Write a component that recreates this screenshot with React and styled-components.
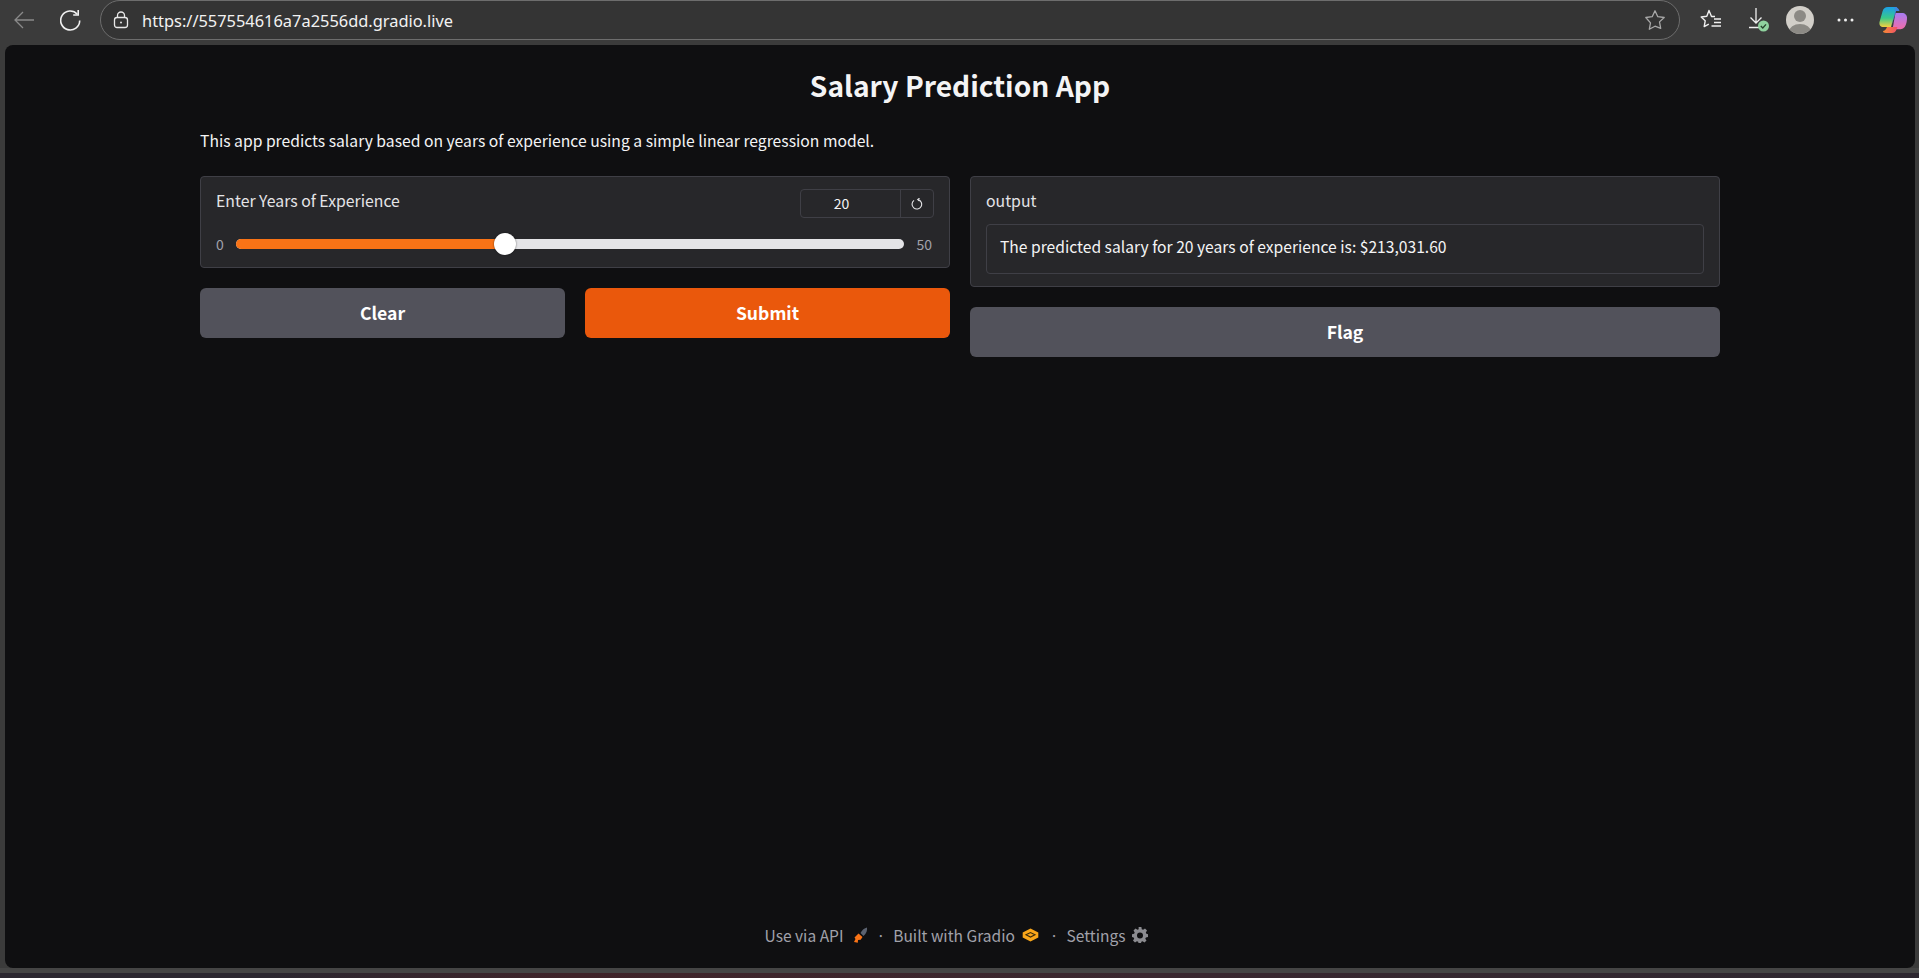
import React from 'react';
import styled, { createGlobalStyle } from 'styled-components';

const GlobalStyle = createGlobalStyle`
    html, body {
        margin: 0;
        padding: 0;
        height: 100%;
        background: #3b3b3b;
        overflow: hidden;
    }
    #root {
        height: 100%;
    }
`

const Screen = styled.div`
    height: 978px;
    display: flex;
    flex-direction: column;
    background: #3b3b3b;
    font-family: "Noto Sans CJK KR", "Source Sans Pro", "Noto Sans", sans-serif;
`

const TopBar = styled.div`
    height: 45px;
    flex-shrink: 0;
    display: flex;
    align-items: flex-start;
    padding: 0 0 0 14px;
    box-sizing: border-box;
`

const NavButton = styled.div`
    width: ${p => p.$w}px;
    height: 40px;
    display: flex;
    align-items: center;
    flex-shrink: 0;
`

const AddressBar = styled.div`
    width: 1580px;
    height: 40px;
    margin-left: 14px;
    box-sizing: border-box;
    border: 1px solid #6d6d6d;
    border-radius: 20px;
    background: #343434;
    display: flex;
    align-items: center;
    padding: 0 13px 0 12px;
    flex-shrink: 0;
`

const Url = styled.span`
    margin-left: 13px;
    flex: 1;
    font-family: "Noto Sans", "Open Sans", sans-serif;
    font-size: 16.4px;
    color: #f2f2f2;
`

const Tools = styled.div`
    display: flex;
    align-items: center;
    margin-left: 20px;
`

const Page = styled.div`
    flex: 1;
    margin: 0 4px 0 5px;
    background: #0f0f11;
    border-radius: 8px;
    display: flex;
    flex-direction: column;
    align-items: center;
    min-height: 0;
`

const Content = styled.div`
    width: 1520px;
    display: flex;
    flex-direction: column;
`

const Title = styled.h1`
    margin: 0;
    padding-top: 18px;
    height: 68px;
    box-sizing: border-box;
    text-align: center;
    font-size: 28.2px;
    line-height: 44px;
    font-weight: 600;
    color: #f4f4f5;
`

const Intro = styled.p`
    margin: 0;
    padding-top: 16px;
    height: 63px;
    box-sizing: border-box;
    font-size: 15.7px;
    line-height: 24px;
    color: #f4f4f5;
`

const Columns = styled.div`
    display: grid;
    grid-template-columns: 750px 750px;
    gap: 20px;
    align-items: start;
`

const Column = styled.div`
    display: flex;
    flex-direction: column;
    gap: 20px;
`

const Panel = styled.div`
    background: #27272a;
    border: 1px solid #3f3f46;
    border-radius: 4px;
    box-sizing: border-box;
    padding: 11px 15px 0 15px;
    height: ${p => p.$h}px;
`

const SliderHead = styled.div`
    display: flex;
    justify-content: space-between;
    align-items: flex-start;
    height: 48px;
`

const Label = styled.span`
    display: block;
    padding-top: 1px;
    height: 24px;
    font-size: 15.8px;
    line-height: 24px;
    color: #e4e4e7;
`

const NumberBox = styled.div`
    display: flex;
    height: 29px;
    width: 134px;
    margin-top: 1px;
    box-sizing: border-box;
    border: 1px solid #3f3f46;
    border-radius: 4px;
    color: #f4f4f5;
    font-size: 14px;
    line-height: 27px;
    text-align: center;
`

const NumberValue = styled.span`
    flex: 1;
    padding-right: 18px;
    border-right: 1px solid #3f3f46;
`

const ResetButton = styled.span`
    width: 32px;
    display: flex;
    align-items: center;
    justify-content: center;
`

const SliderRow = styled.div`
    display: flex;
    align-items: center;
    height: 22px;
    margin-top: -3px;
`

const Bound = styled.span`
    font-size: 14px;
    color: #a1a1aa;
    width: ${p => p.$w}px;
    flex-shrink: 0;
    text-align: ${p => p.$align};
`

const Track = styled.div`
    position: relative;
    width: 668px;
    height: 10px;
    flex-shrink: 0;
    border-radius: 5px;
    background: #e4e4e7;
`

const Fill = styled.div`
    height: 100%;
    border-radius: 5px;
    background: #f97316;
`

const Thumb = styled.div`
    position: absolute;
    top: -6px;
    width: 22px;
    height: 22px;
    margin-left: -9px;
    border-radius: 50%;
    background: #fff;
    box-shadow: 0 0 2px rgba(0, 0, 0, 0.6);
`

const ButtonRow = styled.div`
    display: grid;
    grid-template-columns: 1fr 1fr;
    gap: 20px;
`

const Button = styled.button`
    height: 50px;
    padding: 0 0 2px 0;
    border: none;
    border-radius: 6px;
    background: ${p => p.$primary ? "#ea580c" : "#52525b"};
    color: #fff;
    font-family: inherit;
    font-size: 17.6px;
    font-weight: 600;
`

const OutputBox = styled.div`
    margin-top: 11px;
    height: 50px;
    box-sizing: border-box;
    border: 1px solid #3f3f46;
    border-radius: 4px;
    padding: 0 13px 6px 13px;
    display: flex;
    align-items: center;
    font-size: 15.65px;
    color: #f4f4f5;
`

const Footer = styled.div`
    margin-top: auto;
    height: 45px;
    padding-right: 7px;
    display: flex;
    align-items: flex-start;
    font-size: 15.55px;
    line-height: 24px;
    color: #a1a1aa;
`

const FooterLink = styled.span`
    display: flex;
    align-items: center;
    gap: ${p => p.$gap}px;
`

const Dot = styled.span`
    margin: 0 ${p => p.$r}px 0 ${p => p.$l}px;
`

const BottomStrip = styled.div`
    height: 10px;
    flex-shrink: 0;
    display: flex;
    flex-direction: column;
`

const StripEdge = styled.div`
    height: 5px;
    background: #454545;
`

const StripWallpaper = styled.div`
    height: 5px;
    background: linear-gradient(90deg, #2b2730 0%, #2b2730 14%, #40242a 30%, #3a2830 60%, #2d2730 100%);
`

const BackIcon = () => (
    <svg width="20" height="20" viewBox="0 0 20 20" fill="none" stroke="#8a8a8a" strokeWidth="1.3">
        <path d="M20 10H1M9 2l-8 8 8 8" />
    </svg>
)

const ReloadIcon = () => (
    <svg width="21" height="22" viewBox="0 0 21 22" fill="none" stroke="#f0f0f0" strokeWidth="1.6">
        <path d="M17.300 5.200A9.500 9.500 0 1 0 19.700 11.500" />
        <path d="M18.200 1v5h-5" />
    </svg>
)

const LockIcon = () => (
    <svg width="16" height="18" viewBox="0 0 16 18" fill="none" stroke="#e8e8e8" strokeWidth="1.3">
        <rect x="1.500" y="6.500" width="13" height="10" rx="2.500" />
        <path d="M4.500 6.500V4.500a3.500 3.500 0 0 1 7 0v2" />
        <circle cx="8" cy="11.500" r="1" fill="#e8e8e8" stroke="none" />
    </svg>
)

const StarIcon = () => (
    <svg width="22" height="22" viewBox="0 0 22 22" fill="none" stroke="#a8a8a8" strokeWidth="1.3" strokeLinejoin="round">
        <path d="M11 1.800l2.800 5.900 6.400.8-4.700 4.400 1.200 6.400L11 17.200l-5.700 3.100 1.200-6.400L1.800 8.500l6.400-.8z" />
    </svg>
)

const FavoritesIcon = () => (
    <svg width="22" height="22" viewBox="0 0 22 22" fill="none" stroke="#f0f0f0" strokeWidth="1.4" strokeLinejoin="round">
        <path d="M15 7.500H11.500L9 1.500 6.800 7.300l-5.600.7 4 3.800-1 5.800 4.600-2.500" />
        <path d="M14 10h7M14 13.500h7M11.500 17h9.500" />
    </svg>
)

const DownloadIcon = () => (
    <svg width="24" height="26" viewBox="0 0 24 26" fill="none">
        <path d="M8 1v15M2.500 10.500l5.500 5.500 5.500-5.500M1 20.500h11" stroke="#f0f0f0" strokeWidth="1.3" />
        <circle cx="15.500" cy="19" r="5.500" fill="#8fd19e" />
        <path d="M12.800 19l2 2 3.200-3.600" stroke="#26402c" strokeWidth="1.3" />
    </svg>
)

const AvatarIcon = () => (
    <svg width="28" height="28" viewBox="0 0 28 28">
        <defs>
            <clipPath id="avatar-clip"><circle cx="14" cy="14" r="14" /></clipPath>
        </defs>
        <circle cx="14" cy="14" r="14" fill="#d2cfc9" />
        <g clipPath="url(#avatar-clip)" fill="#8c8a85">
            <circle cx="14" cy="10" r="6" />
            <ellipse cx="14" cy="26" rx="11" ry="8" />
        </g>
    </svg>
)

const MoreIcon = () => (
    <svg width="17" height="4" viewBox="0 0 17 4" fill="#efefef">
        <circle cx="2" cy="2" r="1.500" />
        <circle cx="8.500" cy="2" r="1.500" />
        <circle cx="15" cy="2" r="1.500" />
    </svg>
)

const CopilotIcon = () => (
    <svg width="28" height="28" viewBox="0 0 28 28">
        <defs>
            <linearGradient id="cop-a" x1="0" y1="0" x2="0" y2="1">
                <stop offset="0" stopColor="#1c9fe8" />
                <stop offset="0.55" stopColor="#38c98a" />
                <stop offset="1" stopColor="#f4d03f" />
            </linearGradient>
            <linearGradient id="cop-b" x1="0" y1="0" x2="0" y2="1">
                <stop offset="0" stopColor="#a77cf2" />
                <stop offset="1" stopColor="#f06ca8" />
            </linearGradient>
            <linearGradient id="cop-c" x1="0" y1="0" x2="1" y2="0">
                <stop offset="0" stopColor="#f78a33" />
                <stop offset="1" stopColor="#f0506a" />
            </linearGradient>
        </defs>
        <path d="M9 1h9l-6 20H4.500C1.500 21 0 19 .5 16L3.500 5.500C4.200 2.500 6 1 9 1z" fill="url(#cop-a)" />
        <path d="M16.500 7h6.500c3 0 5 2 5 5 0 5-1.500 9-4 10.500-1 .5-2 .8-3.500.8h-7z" fill="url(#cop-b)" />
        <path d="M8 21h10.500l-1 2.500C16.700 26 15 27 13 27H7c-2 0-3-1-3-2 1.500 0 3-1.500 4-4z" fill="url(#cop-c)" />
        <path d="M15.500 1c2.500 0 4.300 1.500 5 4H17l-5 16 4-15z" fill="#3f86e0" />
    </svg>
)

const ResetIcon = () => (
    <svg width="12" height="12" viewBox="0 0 12 12" fill="none" stroke="#e4e4e7" strokeWidth="1.1">
        <path d="M3 2.400A4.800 4.800 0 1 0 7 1.600" />
        <path d="M8.500.2 6.700 1.600l1.800 1.600" />
    </svg>
)

const RocketIcon = () => (
    <svg width="15" height="17" viewBox="0 0 15 17">
        <path d="M7.500 6C9 3 11.500 1 14 .5c.5 2.500-.5 6-3.500 8.500z" fill="#5b6270" />
        <path d="M5.500 6.500l4 3.500-1.800 2.700-2.700.4-.2 2.600-3.800-.7L2.500 12 1.500 10.500z" fill="#f97316" />
    </svg>
)

const GradioIcon = () => (
    <svg width="17" height="14" viewBox="0 0 17 14">
        <path d="M8.500.5l7.800 4v5l-7.800 4-7.800-4v-5z" fill="#f9a61a" />
        <path d="M4 6.800l4.500-2.300 4.500 2.300-4.500 2.300z" fill="none" stroke="#3a2a0c" strokeWidth="1.100" />
    </svg>
)

const GearIcon = () => (
    <svg width="16" height="16" viewBox="0 0 16 16">
        <path fillRule="evenodd" fill="#8b8b90" d="M6.600 0h2.800l.4 2.200 1.300.6 1.900-1.200 2 2-1.200 1.900.6 1.300L16 7.200v2.800l-2.100.4-.6 1.300 1.200 1.800-2 2-1.900-1.200-1.300.5-.4 2.200H6.600l-.4-2.200-1.300-.5L3 15.500l-2-2 1.200-1.800-.6-1.300L0 10V7.200l2.100-.4.600-1.300L1.500 3.600l2-2 1.900 1.200 1.300-.6zM8 5.400a3 3 0 1 0 0 6 3 3 0 0 0 0-6z" />
    </svg>
)

const App = () => {
    const years = 20;
    const max = 50;
    const percent = (years / max) * 100;

    return (
        <Screen>
            <GlobalStyle />
            <TopBar>
                <NavButton $w={46}><BackIcon /></NavButton>
                <NavButton $w={26}><ReloadIcon /></NavButton>
                <AddressBar>
                    <LockIcon />
                    <Url>https://557554616a7a2556dd.gradio.live</Url>
                    <StarIcon />
                </AddressBar>
                <Tools>
                    <NavButton $w={48}><FavoritesIcon /></NavButton>
                    <NavButton $w={38}><DownloadIcon /></NavButton>
                    <NavButton $w={51}><AvatarIcon /></NavButton>
                    <NavButton $w={42}><MoreIcon /></NavButton>
                    <NavButton $w={30}><CopilotIcon /></NavButton>
                </Tools>
            </TopBar>
            <Page>
                <Content>
                    <Title>Salary Prediction App</Title>
                    <Intro>This app predicts salary based on years of experience using a simple linear regression model.</Intro>
                    <Columns>
                        <Column>
                            <Panel $h={92}>
                                <SliderHead>
                                    <Label>Enter Years of Experience</Label>
                                    <NumberBox>
                                        <NumberValue>{years}</NumberValue>
                                        <ResetButton><ResetIcon /></ResetButton>
                                    </NumberBox>
                                </SliderHead>
                                <SliderRow>
                                    <Bound $w={20} $align="left">0</Bound>
                                    <Track>
                                        <Fill style={{ width: `${percent}%` }} />
                                        <Thumb style={{ left: `${percent}%` }} />
                                    </Track>
                                    <Bound $w={28} $align="right">{max}</Bound>
                                </SliderRow>
                            </Panel>
                            <ButtonRow>
                                <Button>Clear</Button>
                                <Button $primary>Submit</Button>
                            </ButtonRow>
                        </Column>
                        <Column>
                            <Panel $h={111}>
                                <Label>output</Label>
                                <OutputBox>The predicted salary for {years} years of experience is: $213,031.60</OutputBox>
                            </Panel>
                            <Button>Flag</Button>
                        </Column>
                    </Columns>
                </Content>
                <Footer>
                    <FooterLink $gap={10}>Use via API <RocketIcon /></FooterLink>
                    <Dot $l={8} $r={8}>·</Dot>
                    <FooterLink $gap={7}>Built with Gradio <GradioIcon /></FooterLink>
                    <Dot $l={11} $r={8}>·</Dot>
                    <FooterLink $gap={7}>Settings <GearIcon /></FooterLink>
                </Footer>
            </Page>
            <BottomStrip>
                <StripEdge />
                <StripWallpaper />
            </BottomStrip>
        </Screen>
    )
}

export default App;
